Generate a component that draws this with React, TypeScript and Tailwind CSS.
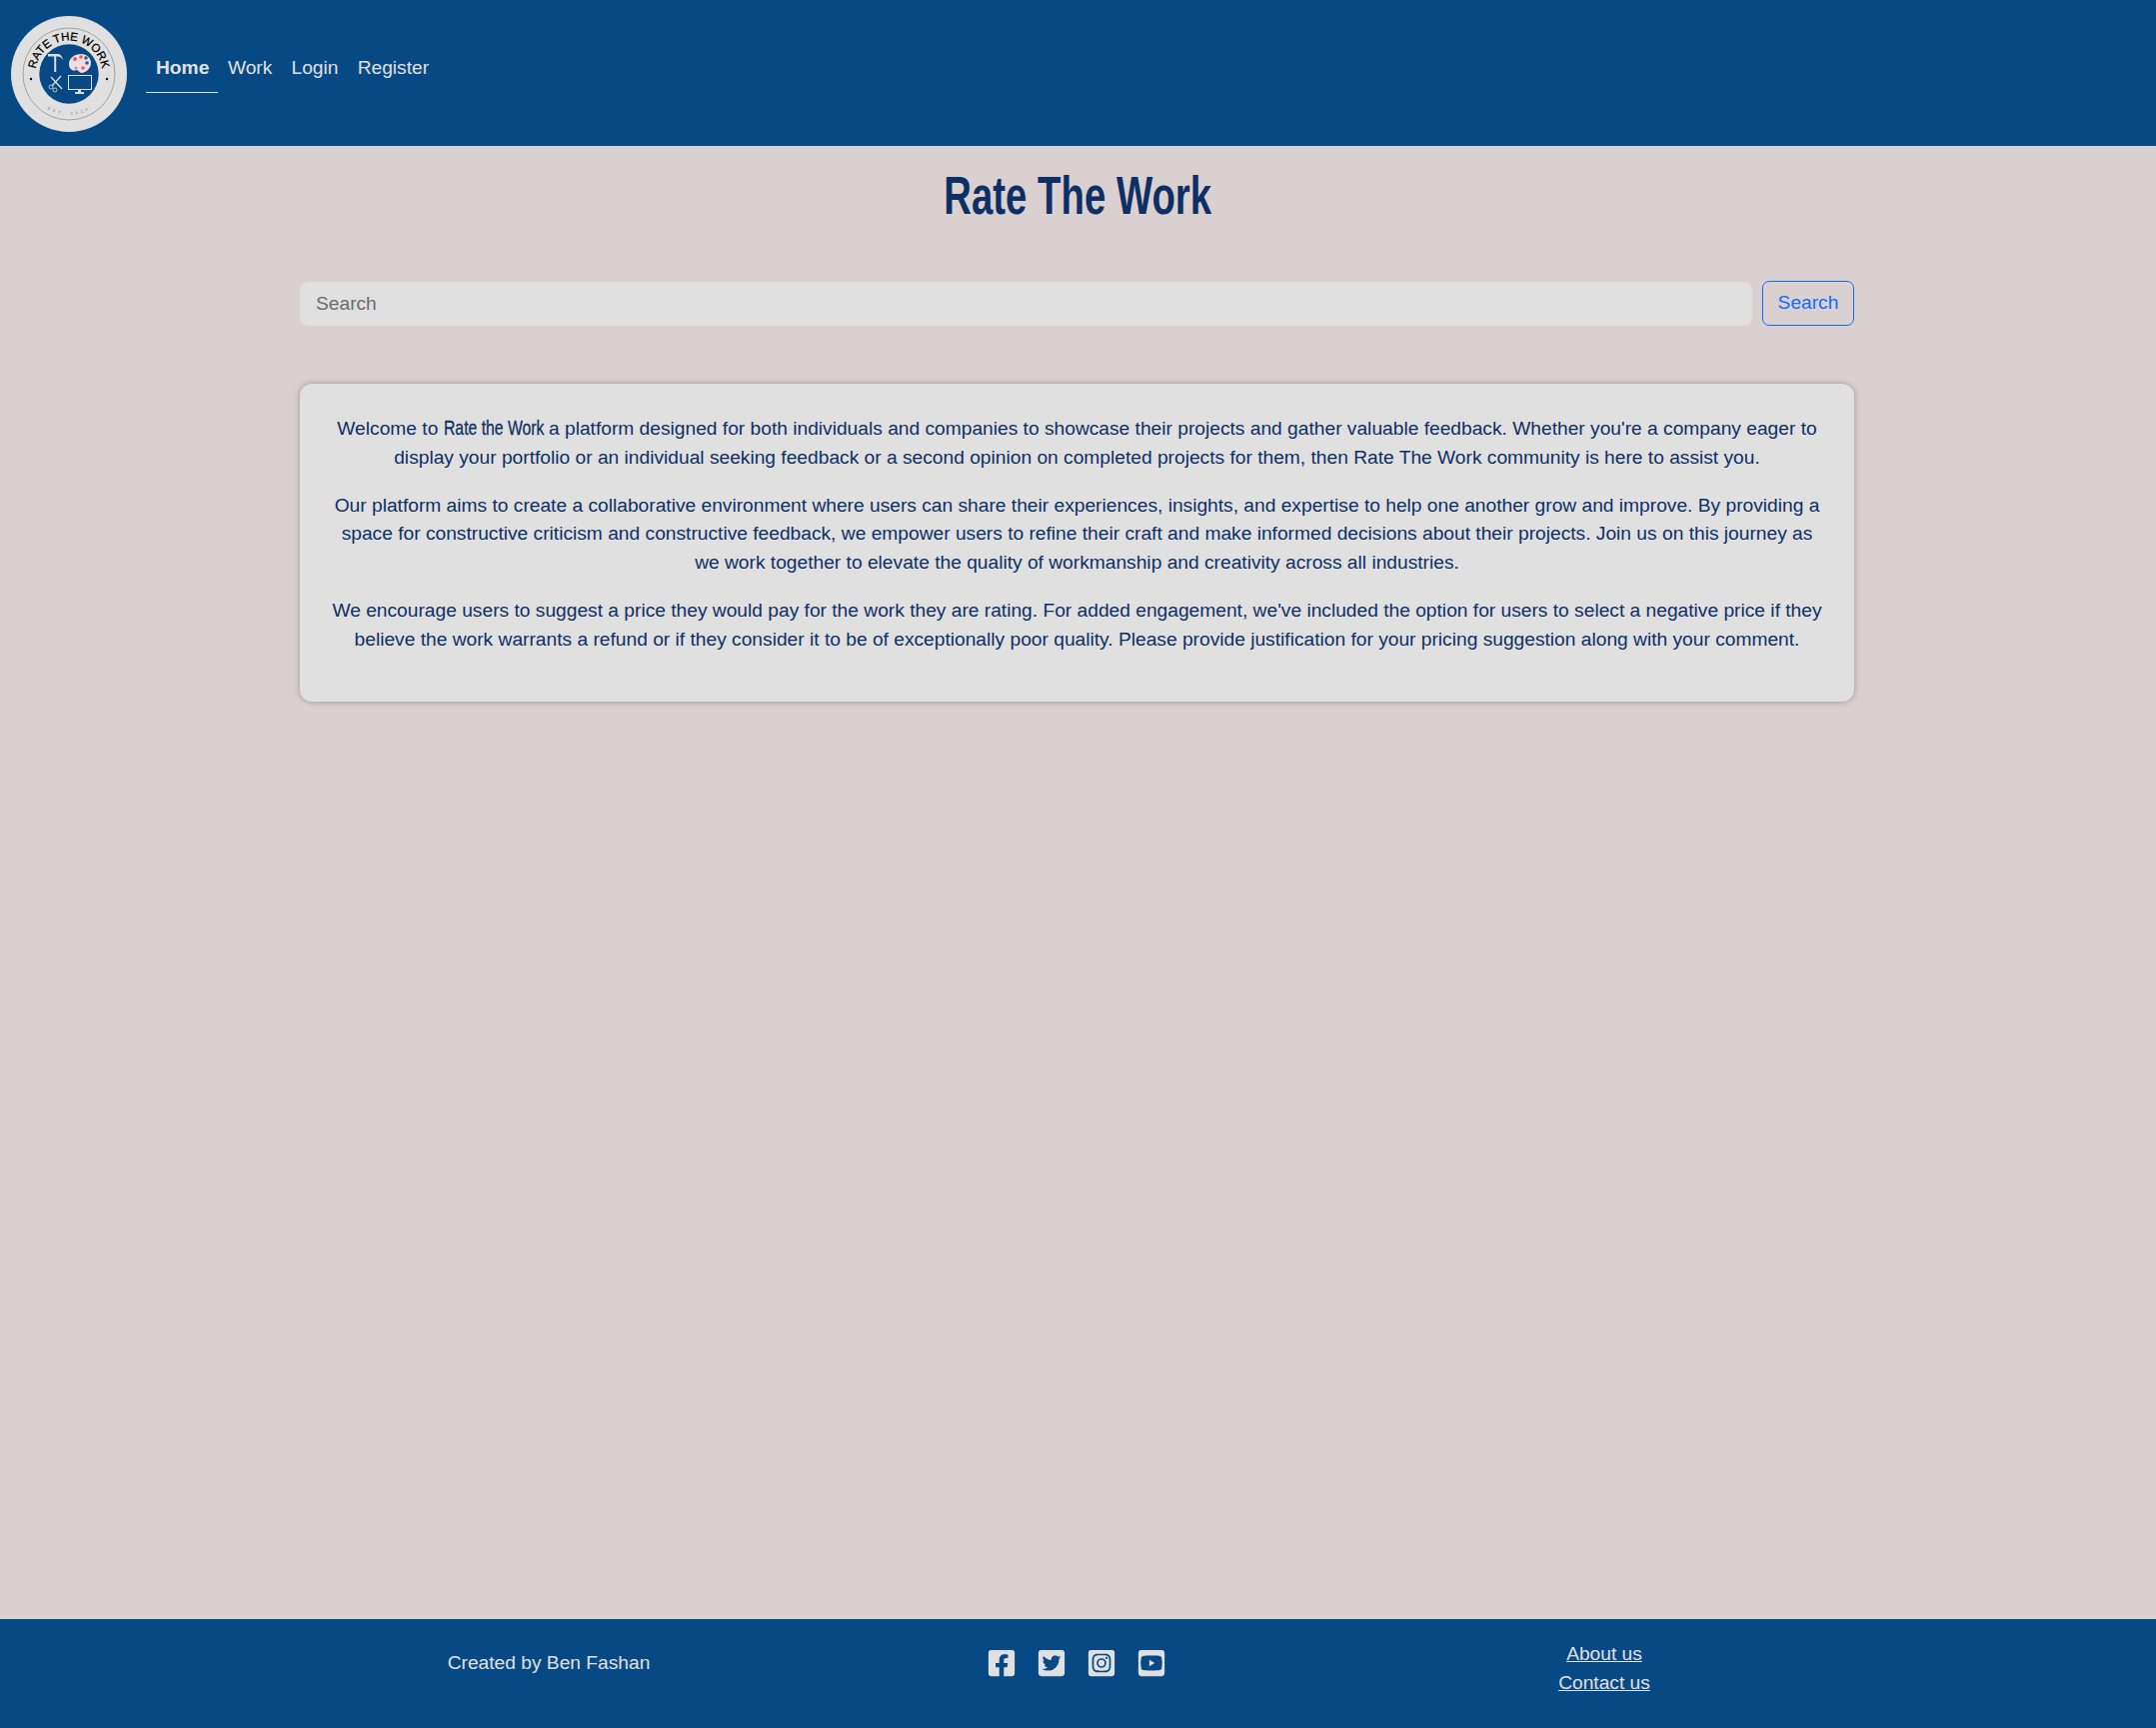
import { FaFacebookSquare, FaTwitterSquare, FaYoutubeSquare, FaInstagramSquare } from 'react-icons/fa'

const links = ['Work', 'Login', 'Register']

function Logo() {
  return (
    <svg viewBox="0 0 116 116" className="w-[116px] h-[116px] shrink-0">
      <circle cx="58" cy="58" r="58" fill="#e0e0e0" />
      <circle cx="58" cy="58" r="46" fill="none" stroke="#777" strokeWidth="0.6" />
      <circle cx="58" cy="58" r="29.7" fill="#074985" />
      <defs>
        <path id="logo-top" d="M 24.5 58 A 33.5 33.5 0 0 1 91.5 58" />
        <path id="logo-bottom" d="M 17 58 A 41 41 0 0 0 99 58" />
      </defs>
      <text fontFamily="Liberation Sans, sans-serif" fontSize="11.5" fill="#000" stroke="#000" strokeWidth="0.25">
        <textPath href="#logo-top" startOffset="50%" textAnchor="middle">RATE THE WORK</textPath>
      </text>
      <text fontFamily="Liberation Sans, sans-serif" fontSize="4" fill="#777" letterSpacing="3">
        <textPath href="#logo-bottom" startOffset="50%" textAnchor="middle">EST. 2024</textPath>
      </text>
      <circle cx="20" cy="63" r="1.2" fill="#111" />
      <circle cx="96" cy="63" r="1.2" fill="#111" />
      {/* hammer */}
      <path d="M37 38h11c2 1 3.500 3 4 6-1.500-2-3-3.500-5-3.500h-1.800V56h-2V40.500H37z" fill="#dcdcdc" />
      {/* palette */}
      <path d="M58 48c0-6 6-10 12-10 6 0 10 4 10 9 0 5-4 9-9 10-3 0-3-3-6-3-1 1-3 1-4 0-2-1-3-3-3-6z" fill="#f2dede" />
      <circle cx="64" cy="43" r="2" fill="#ee5a5a" />
      <circle cx="70" cy="41" r="1.800" fill="#ee5a5a" />
      <circle cx="75" cy="42" r="1.800" fill="#2c5aa8" />
      <circle cx="76" cy="47" r="1.800" fill="#2c5aa8" />
      <circle cx="72" cy="52" r="1.800" fill="#ee5a5a" />
      <circle cx="65" cy="52" r="1.500" fill="#8fa6cc" />
      {/* scissors */}
      <path d="M40 61l11 12M50 60L41 70" stroke="#dcdcdc" strokeWidth="1.300" fill="none" />
      <circle cx="40" cy="71" r="2" fill="none" stroke="#dcdcdc" strokeWidth="0.8" />
      <circle cx="44" cy="74" r="2" fill="none" stroke="#dcdcdc" strokeWidth="0.8" />
      {/* monitor */}
      <rect x="57.500" y="59.500" width="23" height="14" fill="none" stroke="#dcdcdc" strokeWidth="1" />
      <path d="M67 74h3v2h3v2h-9v-2h3z" fill="#dcdcdc" />
    </svg>
  )
}

export default function App() {
  return (
    <div className="min-h-[1729px] flex flex-col bg-[#dbd0d0] font-['Liberation_Sans',Arial,sans-serif] text-[19.2px] leading-[28.8px]">
      {/* Nav */}
      <header className="h-[146px] bg-[#074985] flex items-start pl-[11px] pt-[16px]">
        <Logo />
        <nav className="flex ml-[19px] mt-[21px] text-[#e0e0e0]">
          <a className="pl-[10px] pr-[9px] pt-[17px] h-[56px] font-bold border-b border-[#e0e0e0]">Home</a>
          {links.map((l) => (
            <a key={l} className="px-[9.6px] pt-[17px]">{l}</a>
          ))}
        </nav>
      </header>

      {/* Main */}
      <main className="flex-1 w-[1555px] ml-[300px]">
        <h1 className="mt-[18px] h-[62px] pl-[2px] text-center text-[#0e2f66] text-[54px] leading-[62px] font-bold scale-x-[0.71]">
          Rate The Work
        </h1>

        <form className="flex items-center gap-[10px] mt-[55px]">
          <input
            placeholder="Search"
            className="flex-1 h-[44px] rounded-[7px] bg-[#e0e0e0] px-[15px] border border-[#dedede] placeholder:text-[#6c6c6c] outline-none"
          />
          <button type="button" className="w-[92px] h-[45px] rounded-[7px] border border-[#0d6efd] text-[#0d6efd]">
            Search
          </button>
        </form>

        <section className="mt-[58px] bg-[#e0e0e0] rounded-[12px] h-[318px] pt-[31px] px-[28px] text-center text-[#0e2f66] shadow-[0_0_6px_rgba(0,0,0,0.3)]">
          <p className="mb-[19px]">
            Welcome to <span className="inline-block w-[100px] whitespace-nowrap text-left text-[21px] leading-none [-webkit-text-stroke:0.3px] origin-left scale-x-[0.75]">Rate the Work</span> a platform designed for both individuals and companies to showcase their projects and gather valuable feedback. Whether you're a company eager to display your portfolio or an individual seeking feedback or a second opinion on completed projects for them, then Rate The Work community is here to assist you.
          </p>
          <p className="mb-[19px]">
            Our platform aims to create a collaborative environment where users can share their experiences, insights, and expertise to help one another grow and improve. By providing a space for constructive criticism and constructive feedback, we empower users to refine their craft and make informed decisions about their projects. Join us on this journey as we work together to elevate the quality of workmanship and creativity across all industries.
          </p>
          <p>
            We encourage users to suggest a price they would pay for the work they are rating. For added engagement, we've included the option for users to select a negative price if they believe the work warrants a refund or if they consider it to be of exceptionally poor quality. Please provide justification for your pricing suggestion along with your comment.
          </p>
        </section>
      </main>

      {/* Footer */}
      <footer className="h-[109px] bg-[#074985] text-[#e0e0e0]">
        <div className="w-[1584px] ml-[285px] h-full grid grid-cols-3 items-start pt-[29px]">
          <p className="text-center pt-[1px]">Created by Ben Fashan</p>
          <div className="flex justify-center gap-[20px]">
            <FaFacebookSquare className="w-[30px] h-[30px]" />
            <FaTwitterSquare className="w-[30px] h-[30px]" />
            <FaInstagramSquare className="w-[30px] h-[30px]" />
            <FaYoutubeSquare className="w-[30px] h-[30px]" />
          </div>
          <div className="text-center flex flex-col -mt-[8px]">
            <a className="underline">About us</a>
            <a className="underline">Contact us</a>
          </div>
        </div>
      </footer>
    </div>
  )
}
